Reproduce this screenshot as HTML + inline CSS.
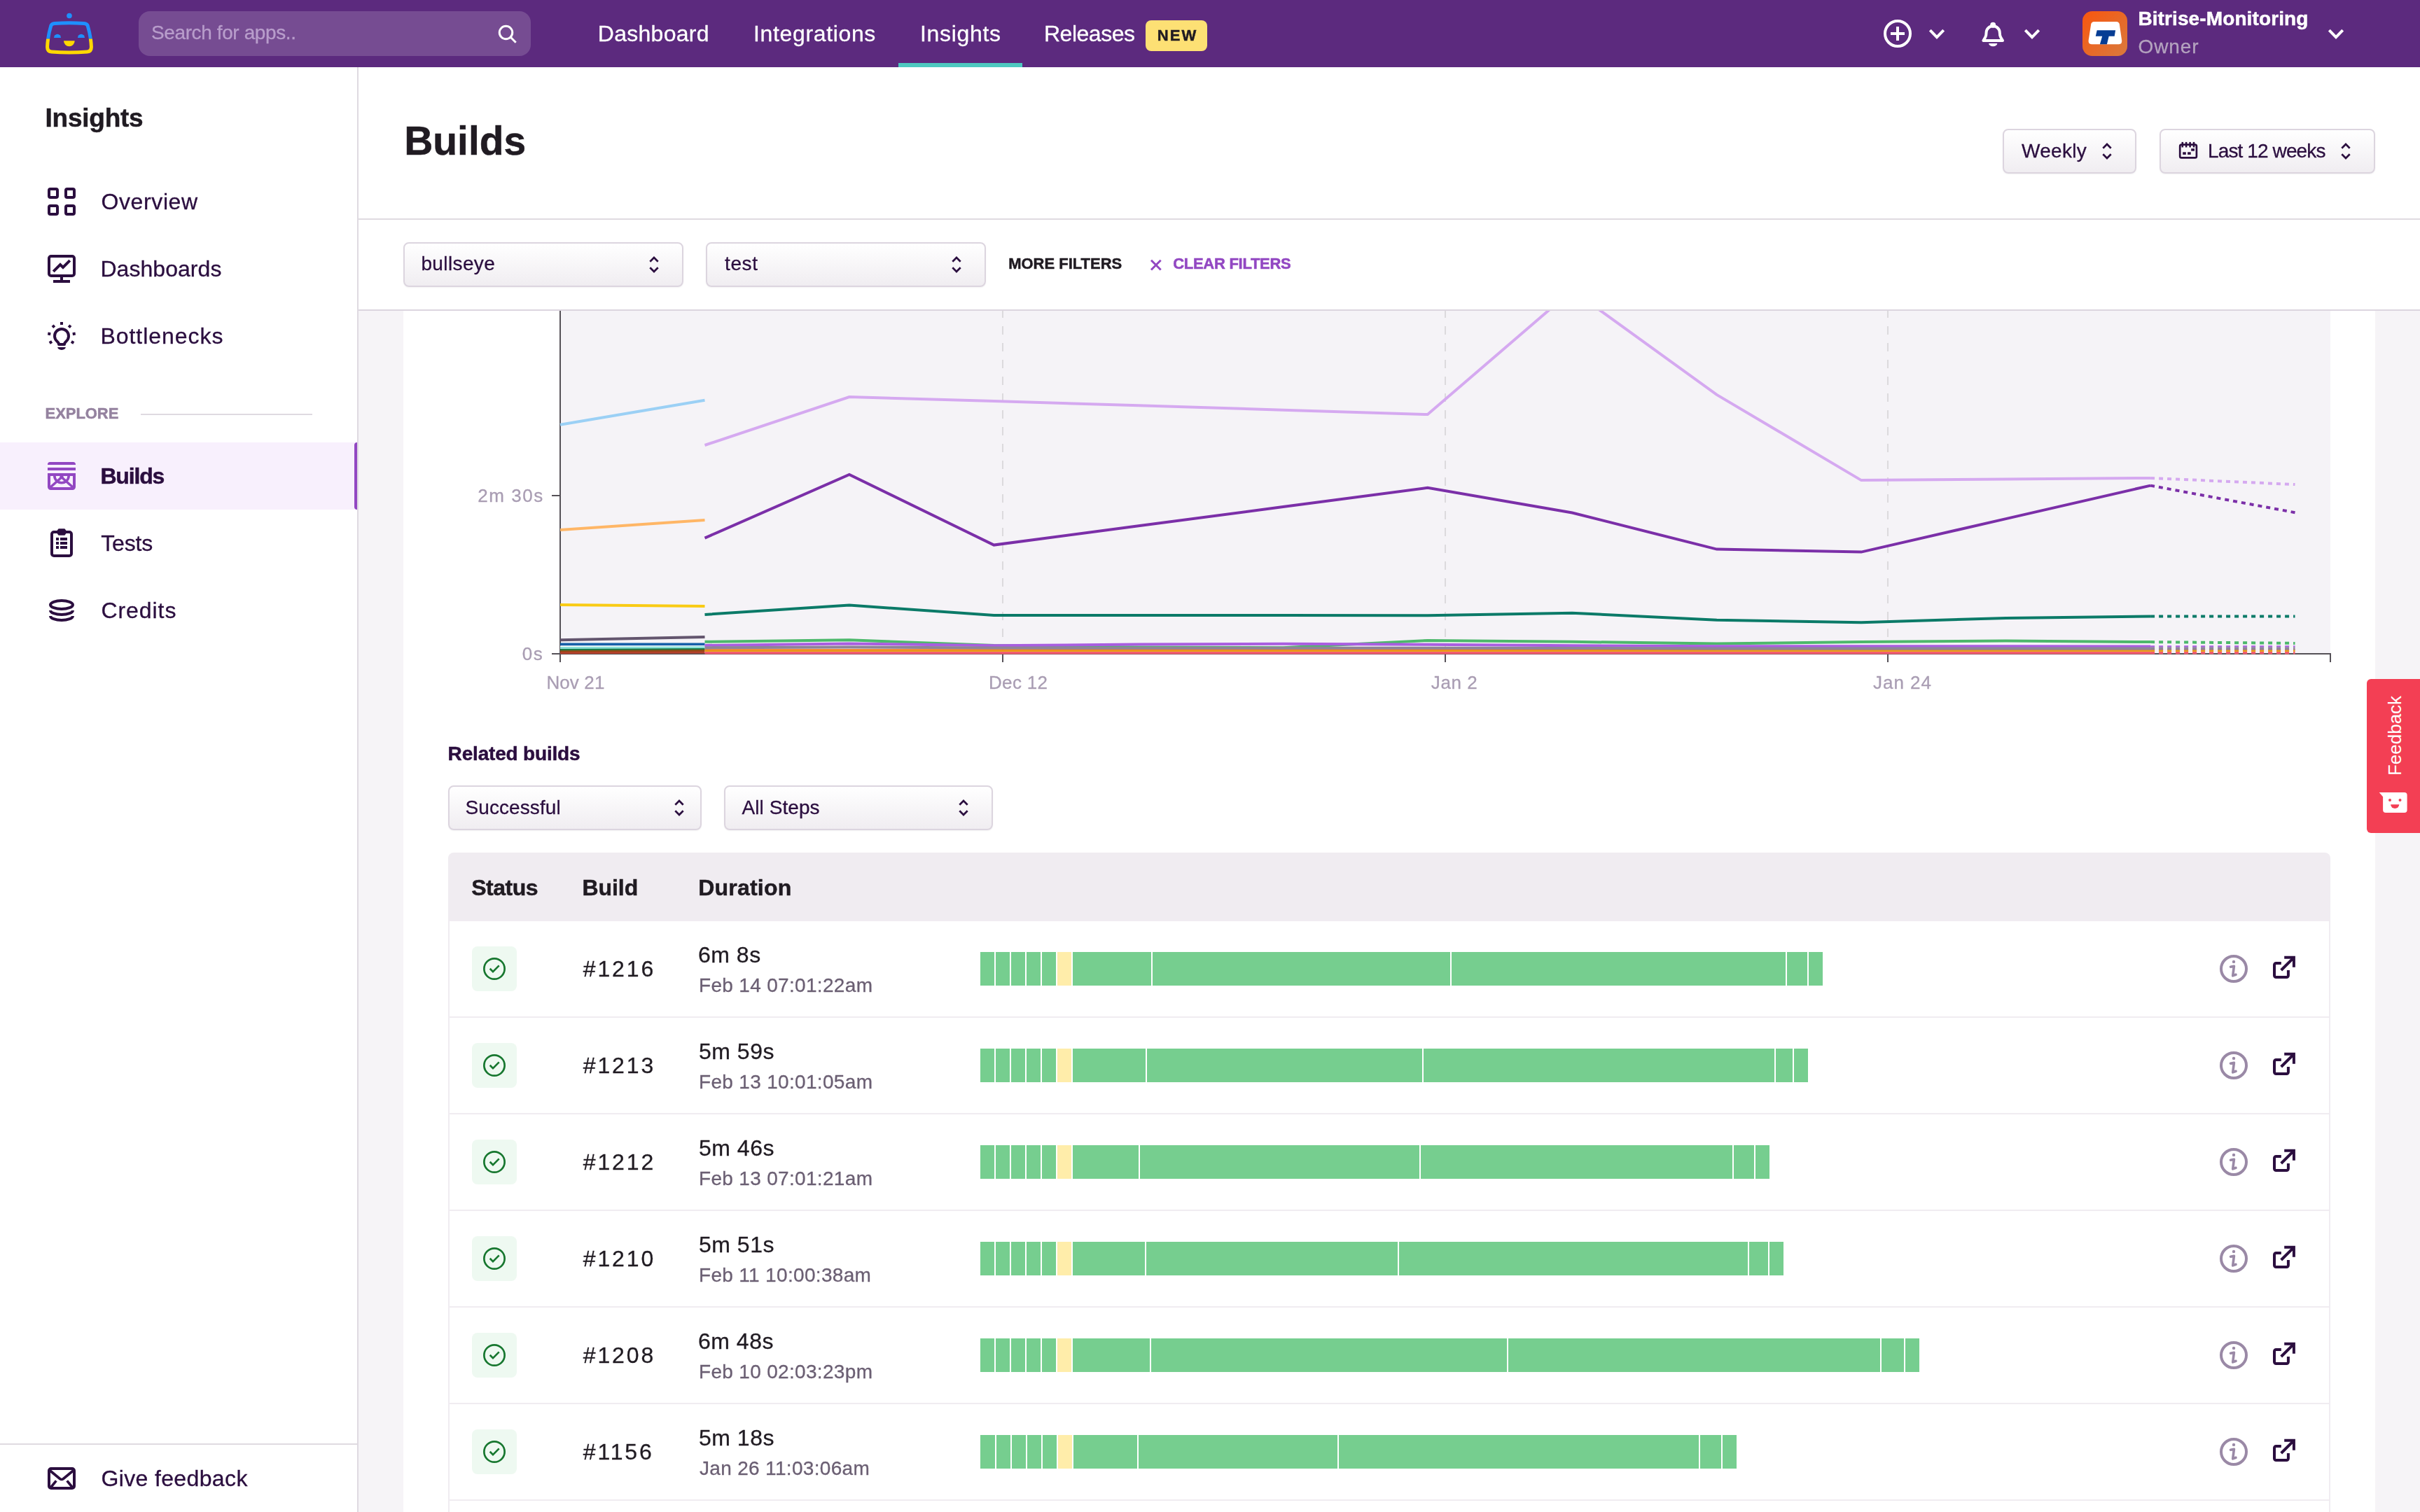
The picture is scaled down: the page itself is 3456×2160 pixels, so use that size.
<!DOCTYPE html>
<html lang="en"><head><meta charset="utf-8"><title>Builds - Insights</title>
<style>
*{box-sizing:content-box}
html,body{margin:0;padding:0}
body{width:3456px;height:2160px;overflow:hidden;background:#f6f4f7;position:relative;font-family:"Liberation Sans",sans-serif}
.a{position:absolute}
.t{position:absolute;white-space:pre;line-height:1;font-family:"Liberation Sans",sans-serif;-webkit-text-stroke:0.3px}
.tb{-webkit-text-stroke:0.5px}
.ov{position:absolute;left:0;top:0;pointer-events:none}
.tl{position:absolute;left:0;top:0;width:3456px;height:2160px;will-change:transform}
.sel{position:absolute;border:2px solid #dcd5df;border-radius:8px;background:linear-gradient(#fff,#f0edf1);box-shadow:0 1px 2px rgba(0,0,0,0.05)}
.b{position:absolute;height:48px}
.rl{position:absolute;left:642px;width:2684px;height:2px;background:#f0ecf1}
.bd{position:absolute;left:674px;width:64px;height:64px;border-radius:8px;background:#eef9f1}
</style></head><body>
<div class="a" style="left:512px;top:96px;width:2944px;height:218px;background:#fff"></div>
<div class="a" style="left:512px;top:312px;width:2944px;height:2px;background:#dfdae1"></div>
<div class="a" style="left:576px;top:444px;width:2816px;height:1716px;background:#fff"></div>
<svg class="ov" width="3456" height="2160" viewBox="0 0 3456 2160"><rect x="800" y="444" width="2528" height="490" fill="#f5f3f7"/>
<path d="M1432 442V934" stroke="#dcdadd" stroke-width="2" stroke-dasharray="12 12"/>
<path d="M2064 442V934" stroke="#dcdadd" stroke-width="2" stroke-dasharray="12 12"/>
<path d="M2696 442V934" stroke="#dcdadd" stroke-width="2" stroke-dasharray="12 12"/>
<path d="M800 444V946M788 708H800M788 934H3328V946M1432 934V946M2064 934V946M2696 934V946" fill="none" stroke="#555157" stroke-width="2"/>
<g clip-path="url(#plotclip)">
<clipPath id="plotclip"><rect x="798" y="444" width="2532" height="492"/></clipPath>
<path d="M800.0 606.8L1006.5 571.8" fill="none" stroke="#9bd0f5" stroke-width="4"/>
<path d="M800.0 757.1L1006.5 742.9" fill="none" stroke="#ffb666" stroke-width="4"/>
<path d="M800.0 863.9L1006.5 866" fill="none" stroke="#f9cb14" stroke-width="4"/>
<path d="M800.0 914.3L1006.5 910" fill="none" stroke="#63556e" stroke-width="4"/>
<path d="M800.0 920.4L1006.5 920.6" fill="none" stroke="#1660a9" stroke-width="4"/>
<path d="M800.0 923.4L1006.5 923.2" fill="none" stroke="#ffffff" stroke-width="2"/>
<path d="M800.0 926L1006.5 925.2" fill="none" stroke="#8be0d8" stroke-width="4"/>
<path d="M800.0 928.6L1006.5 927.4" fill="none" stroke="#1a7a45" stroke-width="3"/>
<path d="M800.0 930.8L1006.5 929.6" fill="none" stroke="#8f4a14" stroke-width="3"/>
<path d="M800.0 932.8L1006.5 932" fill="none" stroke="#b3402a" stroke-width="3"/>
<path d="M1006.5 636L1212.9 567.1L1419.4 572.9L1625.8 579.3L1832.3 585.7L2038.8 592.1L2245.2 414.5L2451.7 563.9L2658.1 686.1L2864.6 684.5L3071.1 682.9" fill="none" stroke="#d5a9f0" stroke-width="4"/>
<path d="M3071.1 682.9L3277.5 692.1" fill="none" stroke="#d5a9f0" stroke-width="4" stroke-dasharray="6 6"/>
<path d="M1006.5 768.6L1212.9 677.9L1419.4 778.6L1625.8 751.3L1832.3 724L2038.8 696.8L2245.2 732.5L2451.7 784.6L2658.1 788.6L2864.6 741.1L3071.1 693.6" fill="none" stroke="#7b2fa8" stroke-width="4"/>
<path d="M3071.1 693.6L3277.5 732.2" fill="none" stroke="#7b2fa8" stroke-width="4" stroke-dasharray="6 6"/>
<path d="M1006.5 877.9L1212.9 864.6L1419.4 878.9L1625.8 878.9L1832.3 878.9L2038.8 879.3L2245.2 875.7L2451.7 885.7L2658.1 889.3L2864.6 882.9L3071.1 880.4" fill="none" stroke="#0b7a68" stroke-width="4"/>
<path d="M3071.1 880.4L3277.5 880.4" fill="none" stroke="#0b7a68" stroke-width="4" stroke-dasharray="6 6"/>
<path d="M1006.5 932.5L1212.9 932.5L1419.4 932.5L1625.8 932.5L1832.3 932.5L2038.8 932.5L2245.2 932.5L2451.7 932.5L2658.1 932.5L2864.6 932.5L3071.1 932.5" fill="none" stroke="#f25c6e" stroke-width="4"/>
<path d="M3071.1 932.5L3277.5 932.5" fill="none" stroke="#f25c6e" stroke-width="4" stroke-dasharray="6 6"/>
<path d="M1006.5 929.9L1212.9 929.9L1419.4 929.9L1625.8 929.9L1832.3 929.9L2038.8 929.9L2245.2 929.9L2451.7 929.9L2658.1 929.9L2864.6 929.9L3071.1 929.9" fill="none" stroke="#e8a81c" stroke-width="2"/>
<path d="M3071.1 929.9L3277.5 929.9" fill="none" stroke="#e8a81c" stroke-width="2" stroke-dasharray="6 6"/>
<path d="M1006.5 928.3L1212.9 928.3L1419.4 928.3L1625.8 928.3L1832.3 928.3L2038.8 928.3L2245.2 928.3L2451.7 928.3L2658.1 928.3L2864.6 928.3L3071.1 928.3" fill="none" stroke="#f07a18" stroke-width="2"/>
<path d="M3071.1 928.3L3277.5 928.3" fill="none" stroke="#f07a18" stroke-width="2" stroke-dasharray="6 6"/>
<path d="M1006.5 916.8L1212.9 914.3L1419.4 922L1625.8 924.6L1832.3 925.2L2038.8 915L2245.2 916.8L2451.7 919.6L2658.1 917.1L2864.6 915.4L3071.1 917.1" fill="none" stroke="#4cb86b" stroke-width="4"/>
<path d="M3071.1 917.1L3277.5 918.9" fill="none" stroke="#4cb86b" stroke-width="4" stroke-dasharray="6 6"/>
<path d="M1006.5 922L1212.9 919.6L1419.4 922.3L1625.8 920.6L1832.3 919.8L2038.8 920.8L2245.2 922.3L2451.7 923.2L2658.1 923.2L2864.6 923.2L3071.1 923.4" fill="none" stroke="#a95ee0" stroke-width="4"/>
<path d="M3071.1 923.4L3277.5 923.4" fill="none" stroke="#a95ee0" stroke-width="2.5" stroke-dasharray="6 6"/>
<path d="M1006.5 925.4L1212.9 924.4L1419.4 925.6L1625.8 925.7L1832.3 925.7L2038.8 925.7L2245.2 926L2451.7 926.4L2658.1 926.4L2864.6 926.4L3071.1 926.4" fill="none" stroke="#8f8396" stroke-width="4"/>
<path d="M3071.1 926.4L3277.5 926.4" fill="none" stroke="#8f8396" stroke-width="4" stroke-dasharray="6 6"/>
</g></svg>
<div class="a" style="left:512px;top:314px;width:2944px;height:128px;background:#fff"></div>
<div class="a" style="left:512px;top:442px;width:2944px;height:2px;background:#dcd5df"></div>
<div class="sel" style="left:2860px;top:184px;width:187px;height:60px"></div>
<div class="sel" style="left:3084px;top:184px;width:304px;height:60px"></div>
<div class="sel" style="left:576px;top:346px;width:396px;height:60px"></div>
<div class="sel" style="left:1008px;top:346px;width:396px;height:60px"></div>
<div class="sel" style="left:640px;top:1122px;width:358px;height:60px"></div>
<div class="sel" style="left:1034px;top:1122px;width:380px;height:60px"></div>
<div class="a" style="left:640px;top:1218px;width:2688px;height:98px;background:#f0ecf1;border-radius:8px 8px 0 0"></div>
<div class="a" style="left:640px;top:1316px;width:2px;height:844px;background:#f0ecf1"></div>
<div class="a" style="left:3326px;top:1316px;width:2px;height:844px;background:#f0ecf1"></div>
<div class="rl" style="top:1452px"></div>
<div class="bd" style="top:1352px"></div>
<div class="rl" style="top:1590px"></div>
<div class="bd" style="top:1490px"></div>
<div class="rl" style="top:1728px"></div>
<div class="bd" style="top:1628px"></div>
<div class="rl" style="top:1866px"></div>
<div class="bd" style="top:1766px"></div>
<div class="rl" style="top:2004px"></div>
<div class="bd" style="top:1904px"></div>
<div class="rl" style="top:2142px"></div>
<div class="bd" style="top:2042px"></div>
<div class="b" style="left:1400px;top:1360px;width:20px;background:#76ce8f"></div>
<div class="b" style="left:1422px;top:1360px;width:20px;background:#76ce8f"></div>
<div class="b" style="left:1444px;top:1360px;width:20px;background:#76ce8f"></div>
<div class="b" style="left:1466px;top:1360px;width:20px;background:#76ce8f"></div>
<div class="b" style="left:1488px;top:1360px;width:20px;background:#76ce8f"></div>
<div class="b" style="left:1510px;top:1360px;width:20px;background:#ffedaa"></div>
<div class="b" style="left:1532px;top:1360px;width:112px;background:#76ce8f"></div>
<div class="b" style="left:1646px;top:1360px;width:425px;background:#76ce8f"></div>
<div class="b" style="left:2073px;top:1360px;width:477px;background:#76ce8f"></div>
<div class="b" style="left:2552px;top:1360px;width:29px;background:#76ce8f"></div>
<div class="b" style="left:2583px;top:1360px;width:20px;background:#76ce8f"></div>
<div class="b" style="left:1400px;top:1498px;width:20px;background:#76ce8f"></div>
<div class="b" style="left:1422px;top:1498px;width:20px;background:#76ce8f"></div>
<div class="b" style="left:1444px;top:1498px;width:20px;background:#76ce8f"></div>
<div class="b" style="left:1466px;top:1498px;width:20px;background:#76ce8f"></div>
<div class="b" style="left:1488px;top:1498px;width:20px;background:#76ce8f"></div>
<div class="b" style="left:1510px;top:1498px;width:20px;background:#ffedaa"></div>
<div class="b" style="left:1532px;top:1498px;width:104px;background:#76ce8f"></div>
<div class="b" style="left:1638px;top:1498px;width:393px;background:#76ce8f"></div>
<div class="b" style="left:2033px;top:1498px;width:501px;background:#76ce8f"></div>
<div class="b" style="left:2536px;top:1498px;width:24px;background:#76ce8f"></div>
<div class="b" style="left:2562px;top:1498px;width:20px;background:#76ce8f"></div>
<div class="b" style="left:1400px;top:1636px;width:20px;background:#76ce8f"></div>
<div class="b" style="left:1422px;top:1636px;width:20px;background:#76ce8f"></div>
<div class="b" style="left:1444px;top:1636px;width:20px;background:#76ce8f"></div>
<div class="b" style="left:1466px;top:1636px;width:20px;background:#76ce8f"></div>
<div class="b" style="left:1488px;top:1636px;width:20px;background:#76ce8f"></div>
<div class="b" style="left:1510px;top:1636px;width:20px;background:#ffedaa"></div>
<div class="b" style="left:1532px;top:1636px;width:94px;background:#76ce8f"></div>
<div class="b" style="left:1628px;top:1636px;width:399px;background:#76ce8f"></div>
<div class="b" style="left:2029px;top:1636px;width:445px;background:#76ce8f"></div>
<div class="b" style="left:2476px;top:1636px;width:29px;background:#76ce8f"></div>
<div class="b" style="left:2507px;top:1636px;width:20px;background:#76ce8f"></div>
<div class="b" style="left:1400px;top:1774px;width:20px;background:#76ce8f"></div>
<div class="b" style="left:1422px;top:1774px;width:20px;background:#76ce8f"></div>
<div class="b" style="left:1444px;top:1774px;width:20px;background:#76ce8f"></div>
<div class="b" style="left:1466px;top:1774px;width:20px;background:#76ce8f"></div>
<div class="b" style="left:1488px;top:1774px;width:20px;background:#76ce8f"></div>
<div class="b" style="left:1510px;top:1774px;width:20px;background:#ffedaa"></div>
<div class="b" style="left:1532px;top:1774px;width:103px;background:#76ce8f"></div>
<div class="b" style="left:1637px;top:1774px;width:359px;background:#76ce8f"></div>
<div class="b" style="left:1998px;top:1774px;width:498px;background:#76ce8f"></div>
<div class="b" style="left:2498px;top:1774px;width:27px;background:#76ce8f"></div>
<div class="b" style="left:2527px;top:1774px;width:20px;background:#76ce8f"></div>
<div class="b" style="left:1400px;top:1912px;width:20px;background:#76ce8f"></div>
<div class="b" style="left:1422px;top:1912px;width:20px;background:#76ce8f"></div>
<div class="b" style="left:1444px;top:1912px;width:20px;background:#76ce8f"></div>
<div class="b" style="left:1466px;top:1912px;width:20px;background:#76ce8f"></div>
<div class="b" style="left:1488px;top:1912px;width:20px;background:#76ce8f"></div>
<div class="b" style="left:1510px;top:1912px;width:20px;background:#ffedaa"></div>
<div class="b" style="left:1532px;top:1912px;width:110px;background:#76ce8f"></div>
<div class="b" style="left:1644px;top:1912px;width:508px;background:#76ce8f"></div>
<div class="b" style="left:2154px;top:1912px;width:531px;background:#76ce8f"></div>
<div class="b" style="left:2687px;top:1912px;width:32px;background:#76ce8f"></div>
<div class="b" style="left:2721px;top:1912px;width:20px;background:#76ce8f"></div>
<div class="b" style="left:1400px;top:2050px;width:21px;background:#76ce8f"></div>
<div class="b" style="left:1423px;top:2050px;width:20px;background:#76ce8f"></div>
<div class="b" style="left:1445px;top:2050px;width:20px;background:#76ce8f"></div>
<div class="b" style="left:1467px;top:2050px;width:20px;background:#76ce8f"></div>
<div class="b" style="left:1489px;top:2050px;width:20px;background:#76ce8f"></div>
<div class="b" style="left:1511px;top:2050px;width:20px;background:#ffedaa"></div>
<div class="b" style="left:1533px;top:2050px;width:91px;background:#76ce8f"></div>
<div class="b" style="left:1626px;top:2050px;width:284px;background:#76ce8f"></div>
<div class="b" style="left:1912px;top:2050px;width:514px;background:#76ce8f"></div>
<div class="b" style="left:2428px;top:2050px;width:29.5px;background:#76ce8f"></div>
<div class="b" style="left:2459.5px;top:2050px;width:20.5px;background:#76ce8f"></div>
<div class="a" style="left:0;top:96px;width:510px;height:2064px;background:#fff;border-right:2px solid #dfdae1"></div>
<div class="a" style="left:0;top:632px;width:510px;height:96px;background:#f8f0fd"></div>
<div class="a" style="left:506px;top:632px;width:4px;height:96px;background:#9247c2;border-radius:4px 0 0 4px"></div>
<div class="a" style="left:201px;top:591px;width:245px;height:2px;background:#dfdae1"></div>
<div class="a" style="left:0;top:2062px;width:510px;height:2px;background:#dfdae1"></div>
<div class="a" style="left:0;top:0;width:3456px;height:96px;background:#5c2a7e"></div>
<div class="a" style="left:198px;top:16px;width:560px;height:64px;border-radius:16px;background:rgba(255,255,255,0.16)"></div>
<div class="a" style="left:1283px;top:90px;width:177px;height:6px;background:#4ec9c0"></div>
<div class="a" style="left:1636px;top:29px;width:88px;height:44px;border-radius:8px;background:#fde074"></div>
<div class="a" style="left:3380px;top:970px;width:76px;height:219.5px;background:#f33f54;border-radius:6px 0 0 6px"></div>
<div class="a" style="left:3419.5px;top:1051px;width:0;height:0"><span style="position:absolute;white-space:pre;line-height:1;font-size:26px;color:#fff;transform:translate(-50%,-50%) rotate(-90deg);transform-origin:center;display:block">Feedback</span></div>
<svg class="ov" width="3456" height="2160" viewBox="0 0 3456 2160"><g fill="none" stroke-width="5" stroke-linejoin="round">
<clipPath id="cb"><rect x="0" y="0" width="200" height="55.5"/></clipPath><clipPath id="cy"><rect x="0" y="55.5" width="200" height="40"/></clipPath>
<path d="M72.8 36.6C73.6 34.2 75.5 33.6 78 33.4C92 32.6 106 32.6 120 33.4C122.5 33.6 124.4 34.2 125.2 36.6C128 46 130 58 130.4 66.5C130.6 71 128.6 73.6 124.5 74C107.5 75.3 90.5 75.3 73.5 74C69.4 73.6 67.4 71 67.6 66.5C68 58 70 46 72.8 36.6Z" stroke="#1e90ff" clip-path="url(#cb)"/>
<path d="M72.8 36.6C73.6 34.2 75.5 33.6 78 33.4C92 32.6 106 32.6 120 33.4C122.5 33.6 124.4 34.2 125.2 36.6C128 46 130 58 130.4 66.5C130.6 71 128.6 73.6 124.5 74C107.5 75.3 90.5 75.3 73.5 74C69.4 73.6 67.4 71 67.6 66.5C68 58 70 46 72.8 36.6Z" stroke="#ffd800" clip-path="url(#cy)"/>
</g>
<circle cx="99" cy="22.5" r="3.8" fill="#1e90ff"/>
<path d="M77 54A5 5.2 0 0 1 87 54Z" fill="#1e90ff"/><path d="M111 54A5 5.2 0 0 1 121 54Z" fill="#1e90ff"/>
<path d="M91 58.3H106.7A7.85 8 0 0 1 91 58.3Z" fill="#ffd800"/>
<circle cx="722.5" cy="46.5" r="9.25" fill="none" stroke="#fff" stroke-width="3"/>
<path d="M729.3 53.3L736.7 60.7" stroke="#fff" stroke-width="3"/>
<circle cx="2710" cy="48" r="18" fill="none" stroke="#fff" stroke-width="4"/>
<path d="M2700 48H2720M2710 38V58" stroke="#fff" stroke-width="4"/>
<path d="M2756.3 43.1L2766 53.1L2775.7 43.1" fill="none" stroke="#fff" stroke-width="4"/>
<g transform="translate(2810 8)">
<path d="M22.4 50H50L47.2 45.2C46.2 43.4 45.8 42 45.8 38.5A9.6 9.2 0 0 0 26.6 38.5C26.6 42 26.2 43.4 25.2 45.2Z" fill="none" stroke="#fff" stroke-width="4" stroke-linejoin="round"/>
<circle cx="36.2" cy="27.8" r="4" fill="#fff"/>
<path d="M30.2 54H42.3A6.05 4.3 0 0 1 30.2 54Z" fill="#fff"/>
</g>
<path d="M2892.3 43.1L2902 53.1L2911.7 43.1" fill="none" stroke="#fff" stroke-width="4"/>
<path d="M3326.3 43.1L3336 53.1L3345.7 43.1" fill="none" stroke="#fff" stroke-width="4"/>
<defs><linearGradient id="av" x1="0" y1="0" x2="1" y2="1"><stop offset="0" stop-color="#f8560f"/><stop offset="1" stop-color="#d97a3d"/></linearGradient></defs>
<rect x="2974" y="16" width="64" height="64" rx="14" fill="url(#av)"/>
<g transform="translate(2960 6)">
<path d="M30.5 25H62.5Q66 25 66.8 28.5L70.2 52Q70.6 57.2 66 57.2H27Q22.2 57.2 22.6 52L26.2 28.5Q27 25 30.5 25Z" fill="#fff"/>
<path d="M34.7 37.2H61.1L59.7 45.8H51.7L48.9 57.2H38.9L42.2 45.8H32.8Z" fill="#063d94"/>
</g><rect x="70" y="270" width="12" height="12" rx="2" fill="none" stroke="#2b0e3f" stroke-width="4"/>
<rect x="94" y="270" width="12" height="12" rx="2" fill="none" stroke="#2b0e3f" stroke-width="4"/>
<rect x="70" y="294" width="12" height="12" rx="2" fill="none" stroke="#2b0e3f" stroke-width="4"/>
<rect x="94" y="294" width="12" height="12" rx="2" fill="none" stroke="#2b0e3f" stroke-width="4"/>
<g transform="translate(58 354)" fill="none" stroke="#2b0e3f" stroke-width="4">
<rect x="12" y="12" width="36" height="28" rx="3"/>
<path d="M30 42V48M18 48H42"/>
<path d="M18.2 33.8L28 24L32 28L41.8 18.2"/>
</g>
<g transform="translate(58 450)">
<path d="M26 42H34C34 39.5 35 38.8 36.4 37.7A10 10 0 1 0 23.6 37.7C25 38.8 26 39.5 26 42Z" fill="none" stroke="#2b0e3f" stroke-width="4" stroke-linejoin="round"/>
<path d="M24.2 46H35.8A5.8 3.9 0 0 1 24.2 46Z" fill="#2b0e3f"/>
<rect x="28" y="10" width="4" height="4" fill="#2b0e3f" transform="rotate(0 30 30)"/>
<rect x="28" y="10" width="4" height="4" fill="#2b0e3f" transform="rotate(40 30 30)"/>
<rect x="28" y="10" width="4" height="4" fill="#2b0e3f" transform="rotate(-40 30 30)"/>
<rect x="28" y="10" width="4" height="4" fill="#2b0e3f" transform="rotate(80 30 30)"/>
<rect x="28" y="10" width="4" height="4" fill="#2b0e3f" transform="rotate(-80 30 30)"/>
<rect x="28" y="10" width="4" height="4" fill="#2b0e3f" transform="rotate(120 30 30)"/>
<rect x="28" y="10" width="4" height="4" fill="#2b0e3f" transform="rotate(-120 30 30)"/>
</g>
<g transform="translate(58 650)">
<path d="M10 14V13.5A3.5 3.5 0 0 1 13.5 10H46.5A3.5 3.5 0 0 1 50 13.5V14Z" fill="#9247c2"/>
<rect x="10" y="18" width="40" height="4" fill="#9247c2"/>
<path d="M12 28H48V45.5A2.5 2.5 0 0 1 45.5 48H14.5A2.5 2.5 0 0 1 12 45.5Z" fill="none" stroke="#9247c2" stroke-width="4"/>
<path d="M13.5 46.5L32 30M46.5 46.5L28 30" stroke="#9247c2" stroke-width="3.6" fill="none"/>
<path d="M19.8 29.5A10.2 10.2 0 0 0 40.2 29.5" stroke="#9247c2" stroke-width="3.6" fill="none"/>
</g>
<g transform="translate(58 746)">
<rect x="16" y="14" width="28" height="34" rx="3" fill="none" stroke="#2b0e3f" stroke-width="4"/>
<path d="M23 14L26 10H34L37 14L34 18H26Z" fill="#2b0e3f" stroke="#2b0e3f" stroke-width="1.5" stroke-linejoin="round"/>
<rect x="22" y="22" width="4" height="4" fill="#2b0e3f"/><rect x="28" y="22" width="10" height="4" fill="#2b0e3f"/>
<rect x="22" y="28" width="4" height="4" fill="#2b0e3f"/><rect x="28" y="28" width="10" height="4" fill="#2b0e3f"/>
<rect x="22" y="34" width="4" height="4" fill="#2b0e3f"/><rect x="28" y="34" width="10" height="4" fill="#2b0e3f"/>
</g>
<g transform="translate(58 842)" fill="none" stroke="#2b0e3f" stroke-width="4">
<ellipse cx="30" cy="22" rx="16" ry="6"/>
<path d="M14 30A16 6 0 0 0 46 30M14 38A16 6 0 0 0 46 38"/>
</g>
<g transform="translate(58 2082)" fill="none" stroke="#2b0e3f">
<rect x="12" y="16" width="36" height="28" rx="3" stroke-width="4"/>
<path d="M13 18.5L27.5 30.5Q30 32.5 32.5 30.5L47 18.5" stroke-width="3.6"/>
<path d="M14 43.5L22.3 33.3M46 43.5L37.7 33.3" stroke-width="3.6"/>
</g><path d="M3003.3 211.7L3009 206L3014.7 211.7M3003.3 220.3L3009 226L3014.7 220.3" fill="none" stroke="#2b0e3f" stroke-width="2.7"/>
<path d="M3344.3 211.7L3350 206L3355.7 211.7M3344.3 220.3L3350 226L3355.7 220.3" fill="none" stroke="#2b0e3f" stroke-width="2.7"/>
<path d="M928.3 373.7L934 368L939.7 373.7M928.3 382.3L934 388L939.7 382.3" fill="none" stroke="#2b0e3f" stroke-width="2.7"/>
<path d="M1360.3 373.7L1366 368L1371.7 373.7M1360.3 382.3L1366 388L1371.7 382.3" fill="none" stroke="#2b0e3f" stroke-width="2.7"/>
<path d="M964.3 1149.7L970 1144L975.7 1149.7M964.3 1158.3L970 1164L975.7 1158.3" fill="none" stroke="#2b0e3f" stroke-width="2.7"/>
<path d="M1370.3 1149.7L1376 1144L1381.7 1149.7M1370.3 1158.3L1376 1164L1381.7 1158.3" fill="none" stroke="#2b0e3f" stroke-width="2.7"/>
<rect x="3113.2" y="206.7" width="23.7" height="18.7" rx="2.2" fill="none" stroke="#2b0e3f" stroke-width="2.7"/>
<rect x="3115.5" y="202.9" width="2.6" height="7.6" fill="#2b0e3f"/>
<rect x="3120.7999999999997" y="202.9" width="2.6" height="7.6" fill="#2b0e3f"/>
<rect x="3126.2999999999997" y="202.9" width="2.6" height="7.6" fill="#2b0e3f"/>
<rect x="3131.7" y="202.9" width="2.6" height="7.6" fill="#2b0e3f"/>
<rect x="3129.2" y="212.2" width="4.7" height="3.5" fill="#2b0e3f"/><rect x="3117.2" y="217.3" width="4.6" height="3.6" fill="#2b0e3f"/><rect x="3124.1" y="217.3" width="4.6" height="3.6" fill="#2b0e3f"/>
<path d="M1644 371.8L1657.7 385.5M1657.7 371.8L1644 385.5" stroke="#9247c2" stroke-width="3"/>
<g transform="translate(0 0)">
<circle cx="706" cy="1384" r="14.65" fill="none" stroke="#17772f" stroke-width="2.7"/>
<path d="M699.7 1383.8L704 1388.1L712.7 1379.4" fill="none" stroke="#17772f" stroke-width="2.7"/>
<circle cx="3190" cy="1384" r="18" fill="none" stroke="#9a89a6" stroke-width="4"/>
<circle cx="3190" cy="1373.9" r="2.2" fill="#9a89a6"/>
<path d="M3185.5 1381.2L3190.4 1380.2L3188.7 1393.9L3193 1392.3" fill="none" stroke="#9a89a6" stroke-width="3.6" stroke-linejoin="round" stroke-linecap="round"/>
<g transform="translate(3150 1344)" fill="none" stroke="#2b0e3f" stroke-width="4">
<path d="M107.8 32H100.5A2.5 2.5 0 0 0 98 34.5V49.5A2.5 2.5 0 0 0 100.5 52H115.4A2.5 2.5 0 0 0 117.9 49.5V42"/>
<path d="M112.2 23.8H125.9V37.8M125.9 23.8L107.7 42"/>
</g>
</g>
<g transform="translate(0 138)">
<circle cx="706" cy="1384" r="14.65" fill="none" stroke="#17772f" stroke-width="2.7"/>
<path d="M699.7 1383.8L704 1388.1L712.7 1379.4" fill="none" stroke="#17772f" stroke-width="2.7"/>
<circle cx="3190" cy="1384" r="18" fill="none" stroke="#9a89a6" stroke-width="4"/>
<circle cx="3190" cy="1373.9" r="2.2" fill="#9a89a6"/>
<path d="M3185.5 1381.2L3190.4 1380.2L3188.7 1393.9L3193 1392.3" fill="none" stroke="#9a89a6" stroke-width="3.6" stroke-linejoin="round" stroke-linecap="round"/>
<g transform="translate(3150 1344)" fill="none" stroke="#2b0e3f" stroke-width="4">
<path d="M107.8 32H100.5A2.5 2.5 0 0 0 98 34.5V49.5A2.5 2.5 0 0 0 100.5 52H115.4A2.5 2.5 0 0 0 117.9 49.5V42"/>
<path d="M112.2 23.8H125.9V37.8M125.9 23.8L107.7 42"/>
</g>
</g>
<g transform="translate(0 276)">
<circle cx="706" cy="1384" r="14.65" fill="none" stroke="#17772f" stroke-width="2.7"/>
<path d="M699.7 1383.8L704 1388.1L712.7 1379.4" fill="none" stroke="#17772f" stroke-width="2.7"/>
<circle cx="3190" cy="1384" r="18" fill="none" stroke="#9a89a6" stroke-width="4"/>
<circle cx="3190" cy="1373.9" r="2.2" fill="#9a89a6"/>
<path d="M3185.5 1381.2L3190.4 1380.2L3188.7 1393.9L3193 1392.3" fill="none" stroke="#9a89a6" stroke-width="3.6" stroke-linejoin="round" stroke-linecap="round"/>
<g transform="translate(3150 1344)" fill="none" stroke="#2b0e3f" stroke-width="4">
<path d="M107.8 32H100.5A2.5 2.5 0 0 0 98 34.5V49.5A2.5 2.5 0 0 0 100.5 52H115.4A2.5 2.5 0 0 0 117.9 49.5V42"/>
<path d="M112.2 23.8H125.9V37.8M125.9 23.8L107.7 42"/>
</g>
</g>
<g transform="translate(0 414)">
<circle cx="706" cy="1384" r="14.65" fill="none" stroke="#17772f" stroke-width="2.7"/>
<path d="M699.7 1383.8L704 1388.1L712.7 1379.4" fill="none" stroke="#17772f" stroke-width="2.7"/>
<circle cx="3190" cy="1384" r="18" fill="none" stroke="#9a89a6" stroke-width="4"/>
<circle cx="3190" cy="1373.9" r="2.2" fill="#9a89a6"/>
<path d="M3185.5 1381.2L3190.4 1380.2L3188.7 1393.9L3193 1392.3" fill="none" stroke="#9a89a6" stroke-width="3.6" stroke-linejoin="round" stroke-linecap="round"/>
<g transform="translate(3150 1344)" fill="none" stroke="#2b0e3f" stroke-width="4">
<path d="M107.8 32H100.5A2.5 2.5 0 0 0 98 34.5V49.5A2.5 2.5 0 0 0 100.5 52H115.4A2.5 2.5 0 0 0 117.9 49.5V42"/>
<path d="M112.2 23.8H125.9V37.8M125.9 23.8L107.7 42"/>
</g>
</g>
<g transform="translate(0 552)">
<circle cx="706" cy="1384" r="14.65" fill="none" stroke="#17772f" stroke-width="2.7"/>
<path d="M699.7 1383.8L704 1388.1L712.7 1379.4" fill="none" stroke="#17772f" stroke-width="2.7"/>
<circle cx="3190" cy="1384" r="18" fill="none" stroke="#9a89a6" stroke-width="4"/>
<circle cx="3190" cy="1373.9" r="2.2" fill="#9a89a6"/>
<path d="M3185.5 1381.2L3190.4 1380.2L3188.7 1393.9L3193 1392.3" fill="none" stroke="#9a89a6" stroke-width="3.6" stroke-linejoin="round" stroke-linecap="round"/>
<g transform="translate(3150 1344)" fill="none" stroke="#2b0e3f" stroke-width="4">
<path d="M107.8 32H100.5A2.5 2.5 0 0 0 98 34.5V49.5A2.5 2.5 0 0 0 100.5 52H115.4A2.5 2.5 0 0 0 117.9 49.5V42"/>
<path d="M112.2 23.8H125.9V37.8M125.9 23.8L107.7 42"/>
</g>
</g>
<g transform="translate(0 690)">
<circle cx="706" cy="1384" r="14.65" fill="none" stroke="#17772f" stroke-width="2.7"/>
<path d="M699.7 1383.8L704 1388.1L712.7 1379.4" fill="none" stroke="#17772f" stroke-width="2.7"/>
<circle cx="3190" cy="1384" r="18" fill="none" stroke="#9a89a6" stroke-width="4"/>
<circle cx="3190" cy="1373.9" r="2.2" fill="#9a89a6"/>
<path d="M3185.5 1381.2L3190.4 1380.2L3188.7 1393.9L3193 1392.3" fill="none" stroke="#9a89a6" stroke-width="3.6" stroke-linejoin="round" stroke-linecap="round"/>
<g transform="translate(3150 1344)" fill="none" stroke="#2b0e3f" stroke-width="4">
<path d="M107.8 32H100.5A2.5 2.5 0 0 0 98 34.5V49.5A2.5 2.5 0 0 0 100.5 52H115.4A2.5 2.5 0 0 0 117.9 49.5V42"/>
<path d="M112.2 23.8H125.9V37.8M125.9 23.8L107.7 42"/>
</g>
</g>
<g transform="translate(3376 1110)"><path d="M21.7 22H57.6A4 4 0 0 1 61.6 26V47.1A4 4 0 0 1 57.6 51.1H31.1A4 4 0 0 1 27.1 47.1V28.3Z" fill="#fff"/><circle cx="37" cy="33" r="2" fill="#f33f54"/><circle cx="51.5" cy="33" r="2" fill="#f33f54"/><path d="M38.1 39.3H50.3A6.1 5.6 0 0 1 38.1 39.3Z" fill="#f33f54"/></g>
</svg>
<div class="tl">
<span class="t" style="left:216.0px;top:33.3px;font-size:28px;color:#b89dcb;letter-spacing:-0.39px">Search for apps..</span>
<span class="t" style="left:853.8px;top:31.71px;font-size:32px;color:#fff;letter-spacing:0.28px">Dashboard</span>
<span class="t" style="left:1076.0px;top:31.71px;font-size:32px;color:#fff;letter-spacing:0.65px">Integrations</span>
<span class="t" style="left:1314.0px;top:31.71px;font-size:32px;color:#fff;letter-spacing:0.67px">Insights</span>
<span class="t" style="left:1491.0px;top:31.71px;font-size:32px;color:#fff;letter-spacing:-0.49px">Releases</span>
<span class="t tb" style="left:1652.8px;top:40.18px;font-size:22px;font-weight:bold;color:#201b22;letter-spacing:2.04px">NEW</span>
<span class="t tb" style="left:3053.4px;top:13.4px;font-size:28px;font-weight:bold;color:#fff;letter-spacing:0.11px">Bitrise-Monitoring</span>
<span class="t" style="left:3053.6px;top:53.3px;font-size:28px;color:#b4a3bf;letter-spacing:0.88px">Owner</span>
<span class="t tb" style="left:64.6px;top:149.68px;font-size:37px;font-weight:bold;color:#201b22;letter-spacing:-0.26px">Insights</span>
<span class="t" style="left:144.4px;top:271.71px;font-size:32px;color:#2b0e3f;letter-spacing:0.63px">Overview</span>
<span class="t" style="left:143.4px;top:367.71px;font-size:32px;color:#2b0e3f;letter-spacing:0.05px">Dashboards</span>
<span class="t" style="left:143.4px;top:463.71px;font-size:32px;color:#2b0e3f;letter-spacing:0.96px">Bottlenecks</span>
<span class="t tb" style="left:64.6px;top:580.18px;font-size:22px;font-weight:bold;color:#94829f;letter-spacing:-0.06px">EXPLORE</span>
<span class="t tb" style="left:143.4px;top:663.71px;font-size:32px;font-weight:bold;color:#2b0e3f;letter-spacing:-1.16px">Builds</span>
<span class="t" style="left:144.2px;top:759.71px;font-size:32px;color:#2b0e3f;letter-spacing:-0.17px">Tests</span>
<span class="t" style="left:144.4px;top:855.71px;font-size:32px;color:#2b0e3f;letter-spacing:0.94px">Credits</span>
<span class="t" style="left:144.4px;top:2095.71px;font-size:32px;color:#2b0e3f;letter-spacing:0.37px">Give feedback</span>
<span class="t tb" style="left:577.2px;top:172.65px;font-size:57px;font-weight:bold;color:#201b22;letter-spacing:-0.04px">Builds</span>
<span class="t" style="left:2887.0px;top:201.5px;font-size:28px;color:#2b0e3f;letter-spacing:0.3px">Weekly</span>
<span class="t" style="left:3153.0px;top:201.5px;font-size:28px;color:#2b0e3f;letter-spacing:-0.88px">Last 12 weeks</span>
<span class="t" style="left:601.4px;top:363.0px;font-size:28px;color:#2b0e3f;letter-spacing:0.38px">bullseye</span>
<span class="t" style="left:1035.0px;top:363.1px;font-size:28px;color:#2b0e3f;letter-spacing:0.62px">test</span>
<span class="t tb" style="left:1440.2px;top:366.18px;font-size:22px;font-weight:bold;color:#201b22;letter-spacing:-0.01px">MORE FILTERS</span>
<span class="t tb" style="left:1675.2px;top:366.18px;font-size:22px;font-weight:bold;color:#9247c2;letter-spacing:-0.28px">CLEAR FILTERS</span>
<span class="t" style="left:682.2px;top:694.69px;font-size:26px;color:#a99db3;letter-spacing:1.55px">2m 30s</span>
<span class="t" style="left:745.7px;top:920.89px;font-size:26px;color:#a99db3;letter-spacing:1.53px">0s</span>
<span class="t" style="left:780.4px;top:962.49px;font-size:26px;color:#a99db3;letter-spacing:0.12px">Nov 21</span>
<span class="t" style="left:1412.0px;top:962.49px;font-size:26px;color:#a99db3;letter-spacing:0.32px">Dec 12</span>
<span class="t" style="left:2043.8px;top:962.49px;font-size:26px;color:#a99db3;letter-spacing:0.6px">Jan 2</span>
<span class="t" style="left:2675.0px;top:962.49px;font-size:26px;color:#a99db3;letter-spacing:0.98px">Jan 24</span>
<span class="t tb" style="left:639.6px;top:1063.4px;font-size:28px;font-weight:bold;color:#2b0e3f;letter-spacing:-0.18px">Related builds</span>
<span class="t" style="left:664.6px;top:1139.5px;font-size:28px;color:#2b0e3f;letter-spacing:0.07px">Successful</span>
<span class="t" style="left:1059.6px;top:1139.5px;font-size:28px;color:#2b0e3f;letter-spacing:0.06px">All Steps</span>
<span class="t tb" style="left:673.2px;top:1251.51px;font-size:32px;font-weight:bold;color:#201b22;letter-spacing:-0.48px">Status</span>
<span class="t tb" style="left:831.4px;top:1251.51px;font-size:32px;font-weight:bold;color:#201b22;letter-spacing:-0.05px">Build</span>
<span class="t tb" style="left:997.2px;top:1251.51px;font-size:32px;font-weight:bold;color:#201b22;letter-spacing:0.21px">Duration</span>
<span class="t" style="left:832.8px;top:1367.51px;font-size:32px;color:#201b22;letter-spacing:2.85px">#1216</span>
<span class="t" style="left:997.0px;top:1347.51px;font-size:32px;color:#201b22;letter-spacing:0.5px">6m 8s</span>
<span class="t" style="left:998.0px;top:1393.6px;font-size:28px;color:#6b5f73;letter-spacing:0.32px">Feb 14 07:01:22am</span>
<span class="t" style="left:832.8px;top:1505.51px;font-size:32px;color:#201b22;letter-spacing:2.85px">#1213</span>
<span class="t" style="left:998.0px;top:1485.51px;font-size:32px;color:#201b22;letter-spacing:0.5px">5m 59s</span>
<span class="t" style="left:998.0px;top:1531.6px;font-size:28px;color:#6b5f73;letter-spacing:0.32px">Feb 13 10:01:05am</span>
<span class="t" style="left:832.8px;top:1643.51px;font-size:32px;color:#201b22;letter-spacing:2.85px">#1212</span>
<span class="t" style="left:998.0px;top:1623.51px;font-size:32px;color:#201b22;letter-spacing:0.5px">5m 46s</span>
<span class="t" style="left:998.0px;top:1669.6px;font-size:28px;color:#6b5f73;letter-spacing:0.32px">Feb 13 07:01:21am</span>
<span class="t" style="left:832.8px;top:1781.51px;font-size:32px;color:#201b22;letter-spacing:2.85px">#1210</span>
<span class="t" style="left:998.0px;top:1761.51px;font-size:32px;color:#201b22;letter-spacing:0.5px">5m 51s</span>
<span class="t" style="left:998.0px;top:1807.6px;font-size:28px;color:#6b5f73;letter-spacing:0.32px">Feb 11 10:00:38am</span>
<span class="t" style="left:832.8px;top:1919.51px;font-size:32px;color:#201b22;letter-spacing:2.85px">#1208</span>
<span class="t" style="left:997.0px;top:1899.51px;font-size:32px;color:#201b22;letter-spacing:0.5px">6m 48s</span>
<span class="t" style="left:998.0px;top:1945.6px;font-size:28px;color:#6b5f73;letter-spacing:0.32px">Feb 10 02:03:23pm</span>
<span class="t" style="left:832.8px;top:2057.51px;font-size:32px;color:#201b22;letter-spacing:2.85px">#1156</span>
<span class="t" style="left:998.0px;top:2037.51px;font-size:32px;color:#201b22;letter-spacing:0.5px">5m 18s</span>
<span class="t" style="left:999.0px;top:2083.6px;font-size:28px;color:#6b5f73;letter-spacing:0.32px">Jan 26 11:03:06am</span>
</div>
</body></html>
